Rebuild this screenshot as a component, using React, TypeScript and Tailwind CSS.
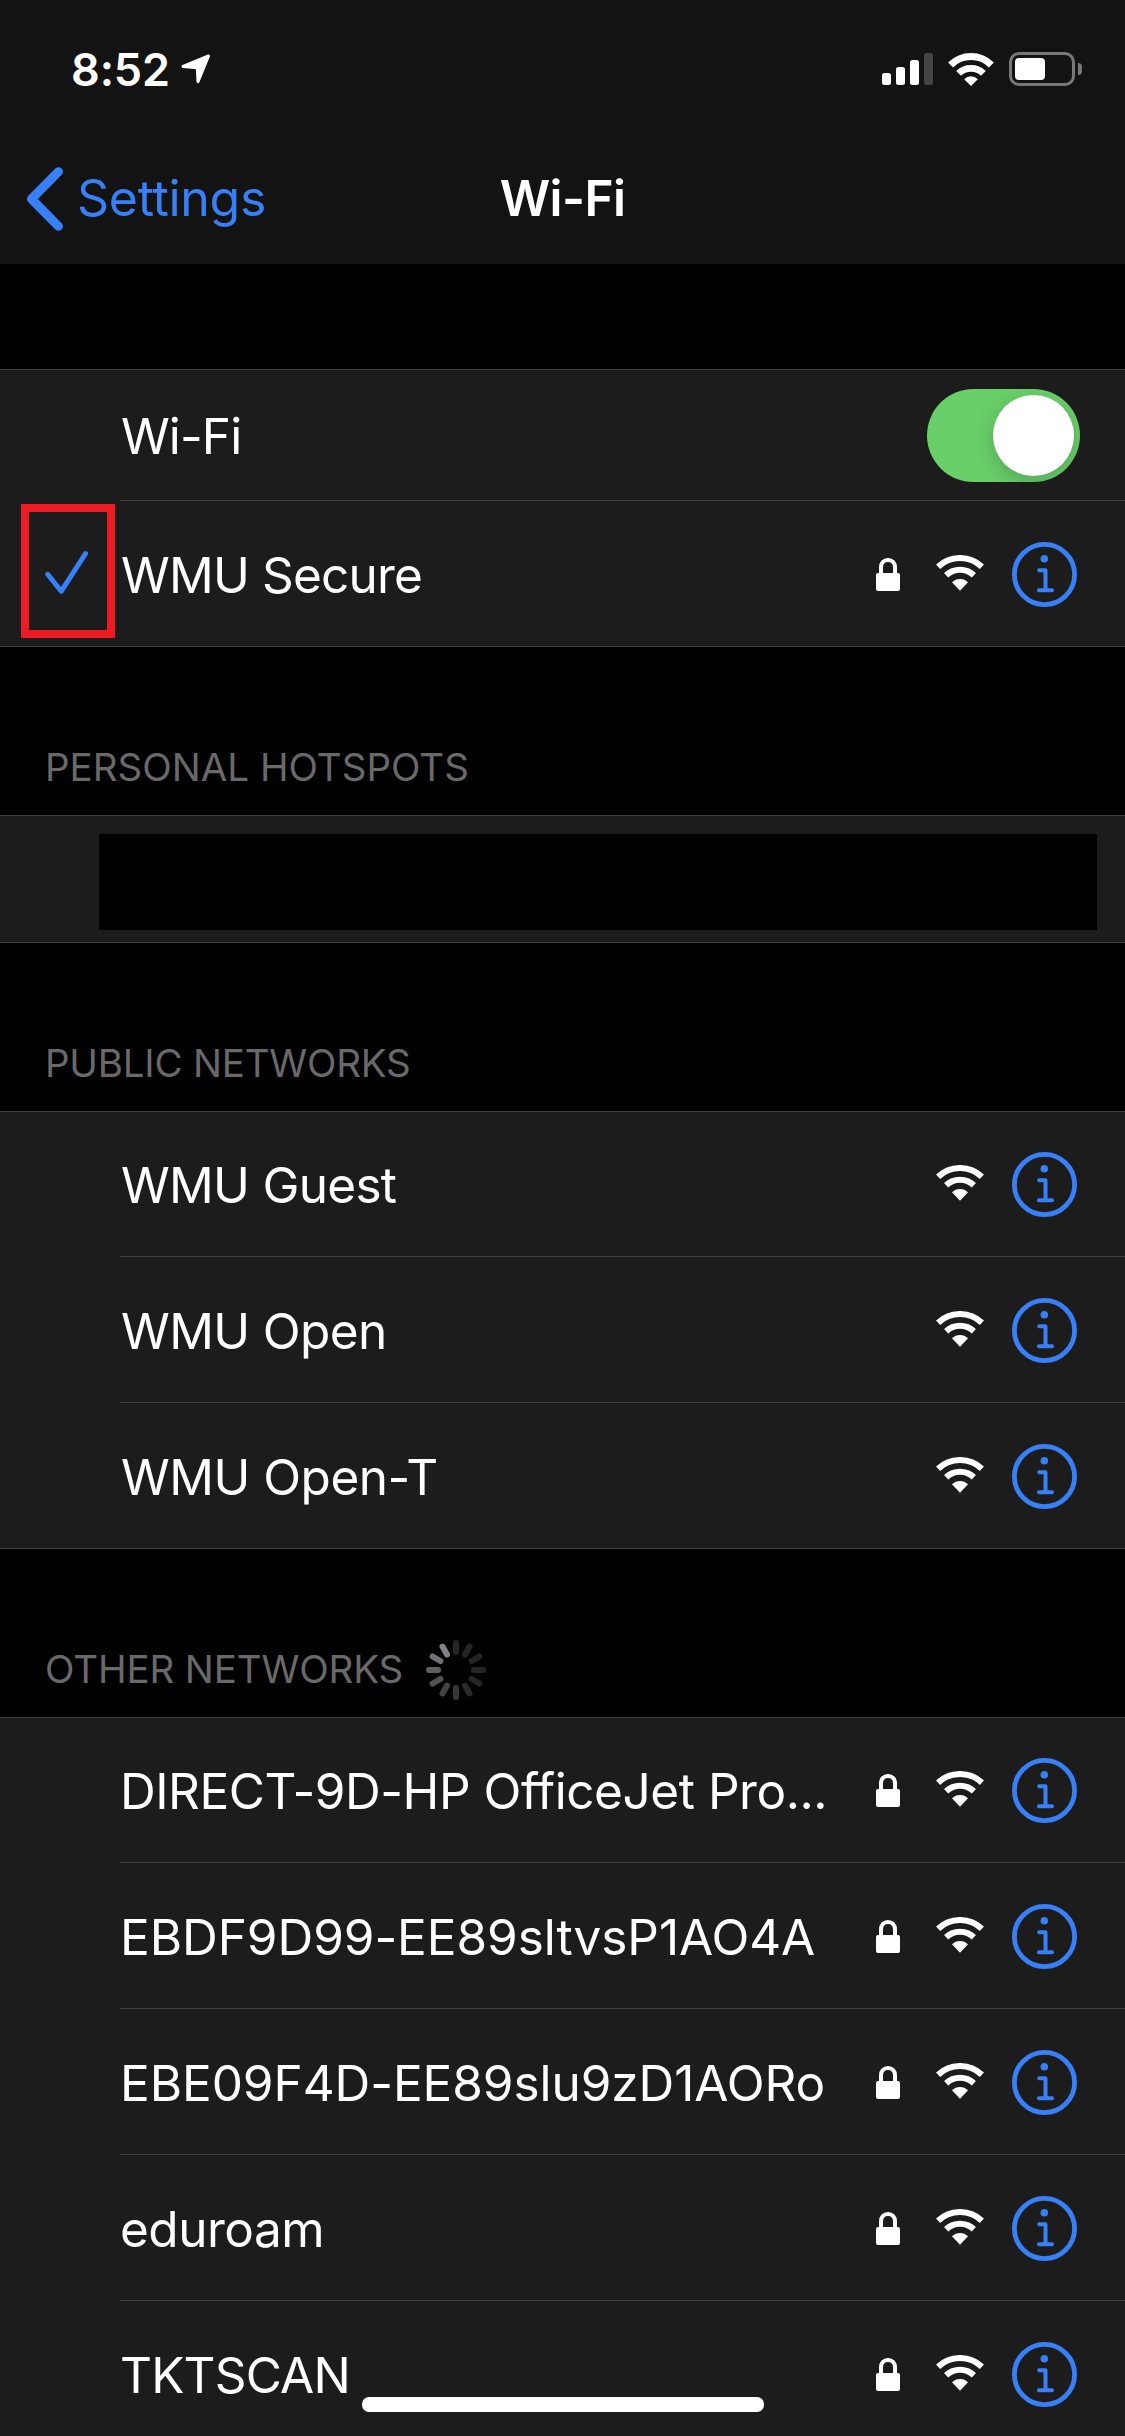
import type { ReactNode } from "react";

type Network = { name: string; text: string; locked?: boolean };

const publicNetworks: Network[] = [
  { name: "WMU Guest", text: "ml-px tracking-[-0.7px]" },
  { name: "WMU Open", text: "ml-px tracking-[-0.61px]" },
  { name: "WMU Open-T", text: "ml-px tracking-[-0.5px]" },
];

const otherNetworks: Network[] = [
  { name: "DIRECT-9D-HP OfficeJet Pro...", text: "tracking-[-0.45px]", locked: true },
  { name: "EBDF9D99-EE89sltvsP1AO4A", text: "tracking-[-0.06px]", locked: true },
  { name: "EBE09F4D-EE89slu9zD1AORo", text: "tracking-[-0.065px]", locked: true },
  { name: "eduroam", text: "tracking-[-0.5px]", locked: true },
  { name: "TKTSCAN", text: "tracking-[-0.8px]", locked: true },
];

function LockIcon() {
  return (
    <svg width="24" height="33" viewBox="0 0 24 33" className="mr-9 block" fill="none">
      <rect x="0" y="15" width="24" height="18" rx="2" fill="#fff" />
      <path d="M5 16V9.5C5 4.8 8 2 12 2s7 2.800 7 7.500V16" stroke="#fff" strokeWidth="4" />
    </svg>
  );
}

function WifiIcon() {
  return (
    <svg width="48" height="36" viewBox="0 0 48 36" className="mb-[4px] mr-7 block" fill="none">
      <path d="M2.100 11.700A31.900 31.900 0 0 1 45.900 11.700" stroke="#fff" strokeWidth="6" />
      <path d="M10.140 20.200A20.200 20.200 0 0 1 37.860 20.200" stroke="#fff" strokeWidth="6" />
      <path d="M24 35.700 16 27.300A11.200 11.200 0 0 1 32 27.300Z" fill="#fff" />
    </svg>
  );
}

function InfoIcon() {
  return (
    <svg width="65" height="65" viewBox="0 0 65 65" className="block" fill="none">
      <circle cx="32.500" cy="32.500" r="30.100" stroke="#3880f7" strokeWidth="4.800" />
      <circle cx="32.300" cy="16.700" r="3.800" fill="#3880f7" />
      <path d="M27.200 28.200H33.500V48.200M26.900 48.200H40" stroke="#3880f7" strokeWidth="4" strokeLinecap="round" strokeLinejoin="round" />
    </svg>
  );
}

function Spinner() {
  const colors = ["#252526", "#252526", "#252526", "#252526", "#252526", "#2b2b2c", "#363637", "#434345", "#515154", "#606064", "#707075", "#828288"];
  return (
    <svg width="60" height="60" viewBox="-30 -30 60 60" className="mt-[2px] block" aria-label="Scanning">
      {colors.map((color, i) => (
        <rect key={i} x="-3" y="-30" width="6" height="15" rx="3" fill={color} transform={`rotate(${i * 30})`} />
      ))}
    </svg>
  );
}

function Row({ name, text, locked, first }: Network & { first?: boolean }) {
  return (
    <li
      className={
        first
          ? "ml-[120px] flex h-[145px] items-center border-b border-[#3f3f41] pr-12 pt-px"
          : "ml-[120px] flex h-[146px] items-center border-b border-[#3f3f41] pr-12 pt-[2px] last:h-[145px] last:border-b-0"
      }
    >
      <span className={`${text} flex-1 whitespace-nowrap`}>{name}</span>
      {locked && <LockIcon />}
      <WifiIcon />
      <InfoIcon />
    </li>
  );
}

function Group({ children }: { children: ReactNode }) {
  return <ul className="border-y border-[#3f3f41] bg-[#1c1c1c]">{children}</ul>;
}

function Caption({ children }: { children: ReactNode }) {
  return <h2 className="flex h-[168px] items-center gap-[23px] pl-[45px] pt-[72px] text-[38.5px] leading-none text-[#696969]">{children}</h2>;
}

function StatusBar() {
  return (
    <div className="flex h-[138px] items-center justify-between pl-[71px] pr-[43px]">
      <div className="flex items-center gap-[11px]">
        <span className="text-[45px] font-semibold leading-none tracking-[-0.15px]">8:52</span>
        <svg width="30" height="31" viewBox="0 0 30 31" className="block">
          <path d="M27.500 2 2 12.500 16.300 13.800 17 27.800Z" fill="#fff" stroke="#fff" strokeWidth="3" strokeLinejoin="round" />
        </svg>
      </div>
      <div className="flex items-center">
        <div className="mr-[15px] flex h-8 items-end gap-[5px]">
          <span className="h-3 w-[9px] rounded-[2.5px] bg-white" />
          <span className="h-[18px] w-[9px] rounded-[2.5px] bg-white" />
          <span className="h-[25px] w-[9px] rounded-[2.5px] bg-white" />
          <span className="h-8 w-[9px] rounded-[2.5px] bg-[#444]" />
        </div>
        <svg width="46" height="33" viewBox="0 0 46 33" className="mr-[15px] block" fill="none">
          <path d="M2.600 12A28.800 28.800 0 0 1 43.400 12" stroke="#fff" strokeWidth="7" />
          <path d="M10.600 20.400A17.800 17.800 0 0 1 35.400 20.400" stroke="#fff" strokeWidth="6.800" />
          <path d="M23 33 16.200 26.200A9.500 9.500 0 0 1 29.800 26.200Z" fill="#fff" />
        </svg>
        <div className="flex h-[34px] w-[66px] items-center rounded-[10px] border-3 border-[#78787a] pl-[3px]">
          <span className="h-[22px] w-[30px] rounded-[4px] bg-white" />
        </div>
        <span className="ml-[3px] h-3 w-1 rounded-r-full bg-[#78787a]" />
      </div>
    </div>
  );
}

export default function App() {
  return (
    <main className="relative h-[2436px] w-[1125px] overflow-hidden bg-black font-['Inter',sans-serif] text-[49.5px] leading-[60px] text-white">
      <header className="h-[264px] bg-[#131313]">
        <StatusBar />
        <nav className="grid h-[121px] grid-cols-3 items-center">
          <a className="flex items-center pl-[26px] text-[#3880f7]">
            <svg width="38" height="64" viewBox="0 0 38 64" className="mr-[13px] block" fill="none">
              <path d="M32.500 4.700 5.500 32l27 27.300" stroke="#3880f7" strokeWidth="9" strokeLinecap="round" strokeLinejoin="round" />
            </svg>
            <span className="mb-[2px] text-[50px] tracking-[-0.3px]">Settings</span>
          </a>
          <h1 className="mb-[2px] text-center font-semibold tracking-[-0.6px]">Wi-Fi</h1>
        </nav>
      </header>

      <div className="h-[105px]" />

      <Group>
        <li className="ml-[120px] flex h-[131px] items-center justify-between border-b border-[#3f3f41] pr-[45px] pt-px">
          <span className="ml-px tracking-[-0.9px]">Wi-Fi</span>
          <span className="flex h-[93px] w-[153px] items-center justify-end overflow-hidden rounded-full bg-[#69cf69] pr-1.5">
            <span className="size-[81px] rounded-full bg-white shadow-[0_6px_20px_rgba(0,0,0,0.2)]" />
          </span>
        </li>
        <li className="flex h-[145px] items-center pr-12 pt-[2px]">
          <span className="mb-[7px] ml-[21px] flex h-[134px] w-[94px] shrink-0 items-center justify-center border-8 border-[#ed1c24] pr-[3px] pt-[3px]">
            <svg width="43" height="43" viewBox="0 0 43 43" className="block" fill="none">
              <path d="M2.700 23.300 16.200 40.300 40.500 2.700" stroke="#3880f7" strokeWidth="5" strokeLinecap="round" strokeLinejoin="round" />
            </svg>
          </span>
          <span className="ml-[6px] flex-1 tracking-[-0.8px]">WMU Secure</span>
          <LockIcon />
          <WifiIcon />
          <InfoIcon />
        </li>
      </Group>

      <Caption>
        <span className="tracking-[0.01px]">PERSONAL HOTSPOTS</span>
      </Caption>
      <Group>
        <li className="h-[126px] pb-[12px] pl-[99px] pr-7 pt-[18px]">
          <div className="h-24 bg-black" />
        </li>
      </Group>

      <Caption>
        <span className="tracking-[-0.22px]">PUBLIC NETWORKS</span>
      </Caption>
      <Group>
        {publicNetworks.map((network, i) => (
          <Row key={network.name} {...network} first={i === 0} />
        ))}
      </Group>

      <Caption>
        <span className="tracking-[-0.12px]">OTHER NETWORKS</span>
        <Spinner />
      </Caption>
      <Group>
        {otherNetworks.map((network, i) => (
          <Row key={network.name} {...network} first={i === 0} />
        ))}
      </Group>

      <div className="absolute bottom-6 left-[362px] h-[15px] w-[402px] rounded-[7px] bg-white" />
    </main>
  );
}
